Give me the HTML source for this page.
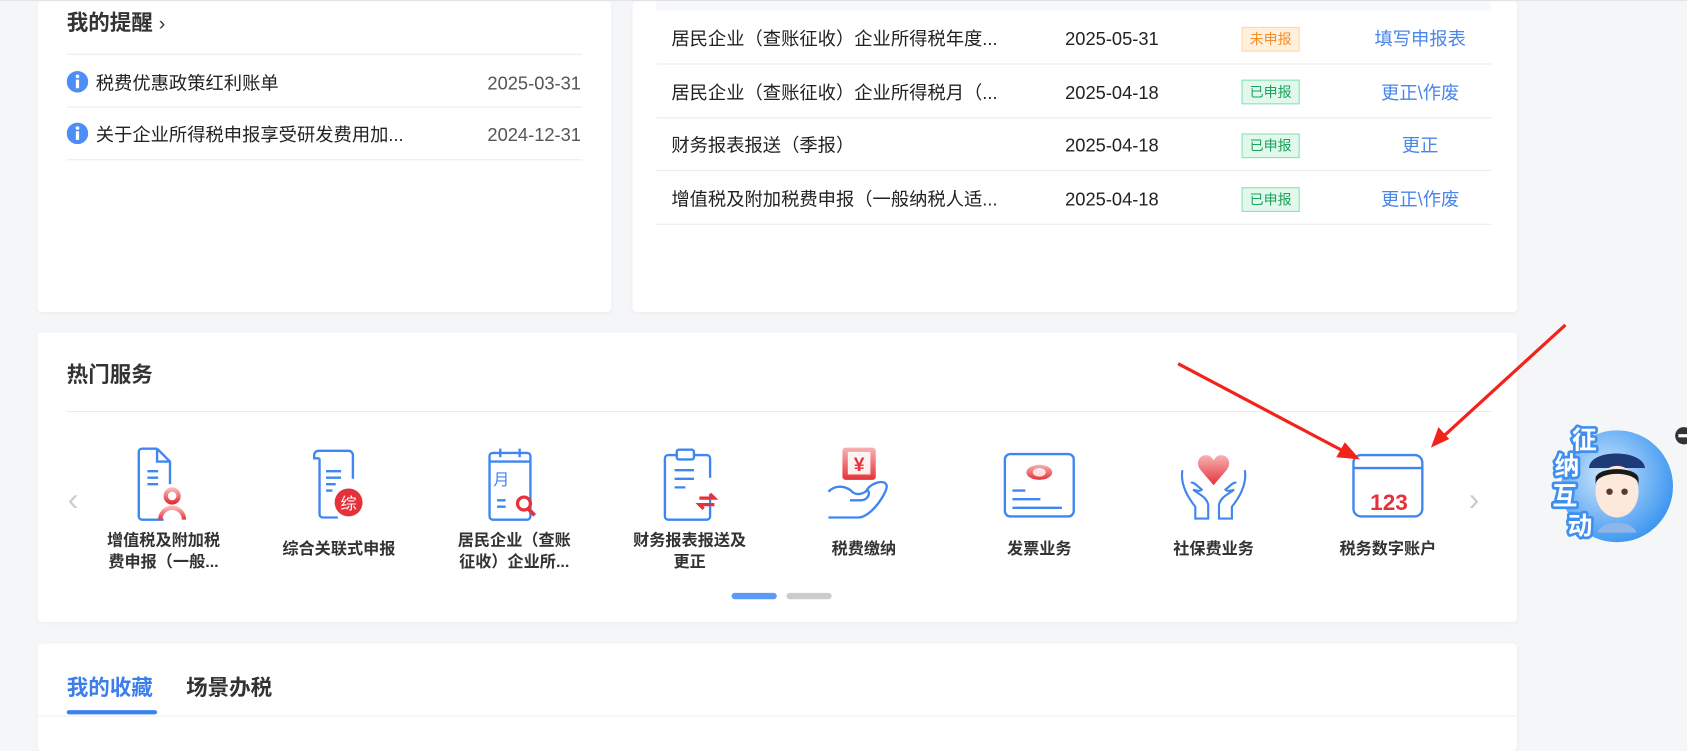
<!DOCTYPE html>
<html><head><meta charset="utf-8">
<style>
html,body{margin:0;padding:0;background:#f5f6f8;overflow:hidden;width:1687px;height:739px}
#s{position:absolute;left:0;top:0;width:1568px;height:687px;transform:scale(1.07589);transform-origin:0 0;font-family:"Liberation Sans","Noto Sans CJK SC",sans-serif;}
.a{position:absolute}
.card{position:absolute;background:#fff;border-radius:4px;box-shadow:0 1px 4px rgba(0,0,0,.04)}
.t17{font-size:17px;color:#222;white-space:nowrap;line-height:22px;height:22px;overflow:visible;margin-top:2px}
.hr{position:absolute;height:1px;background:#ebebeb}
.tag{position:absolute;width:52px;height:21px;font-size:13px;line-height:21px;text-align:center;border:1px solid}
.tg{background:#e3f8ec;border-color:#86e2b6;color:#1aa35a}
.to{background:#fff0de;border-color:#ffd7a6;color:#f38f2a}
.act{position:absolute;width:140px;text-align:center;font-size:17px;color:#4a86e8;line-height:22px;margin-top:2px}
.item{position:absolute;top:415px;width:140px;text-align:center}
.item svg{display:block;margin:0 auto}
.lbl{font-size:15px;font-weight:bold;color:#333;line-height:20px;margin-top:8px}
</style></head><body><div id="s">
<div class="a" style="left:0;top:0;width:1568px;height:1px;background:#e3e4e8"></div>
<svg class="a" style="left:0;top:0" width="0" height="0"><defs>
<linearGradient id="rg" x1="0" y1="0" x2="0" y2="1"><stop offset="0" stop-color="#f7b3b3"/><stop offset="1" stop-color="#e5323a"/></linearGradient>
</defs></svg>

<!-- left card -->
<div class="card" style="left:35px;top:1px;width:533px;height:289px"></div>
<div class="a" style="left:62px;top:9px;font-size:20px;font-weight:bold;color:#333;line-height:26px">我的提醒 <span style="font-weight:normal;font-size:18px">›</span></div>
<div class="hr" style="left:62px;top:50px;width:479px"></div>
<div class="hr" style="left:62px;top:99px;width:479px"></div>
<div class="hr" style="left:62px;top:148px;width:479px"></div>
<svg class="a" style="left:62px;top:66px" width="20" height="20"><circle cx="10" cy="10" r="10" fill="#4e8df5"/><rect x="8.5" y="8" width="3" height="8" fill="#fff"/><circle cx="10" cy="5" r="1.7" fill="#fff"/></svg>
<svg class="a" style="left:62px;top:114px" width="20" height="20"><circle cx="10" cy="10" r="10" fill="#4e8df5"/><rect x="8.5" y="8" width="3" height="8" fill="#fff"/><circle cx="10" cy="5" r="1.7" fill="#fff"/></svg>
<div class="a t17" style="left:89px;top:65px">税费优惠政策红利账单</div>
<div class="a t17" style="left:89px;top:113px">关于企业所得税申报享受研发费用加...</div>
<div class="a t17" style="left:400px;width:140px;text-align:right;top:65px;color:#555">2025-03-31</div>
<div class="a t17" style="left:400px;width:140px;text-align:right;top:113px;color:#555">2024-12-31</div>

<!-- right card -->
<div class="card" style="left:588px;top:1px;width:822px;height:289px"></div>
<div class="a" style="left:610px;top:1px;width:776px;height:9px;background:#f7f8fb"></div>
<div class="hr" style="left:610px;top:59px;width:776px"></div>
<div class="hr" style="left:610px;top:109px;width:776px"></div>
<div class="hr" style="left:610px;top:158px;width:776px"></div>
<div class="hr" style="left:610px;top:208px;width:776px"></div>
<div class="a t17" style="left:624px;top:24px">居民企业（查账征收）企业所得税年度...</div>
<div class="a t17" style="left:624px;top:74px">居民企业（查账征收）企业所得税月（...</div>
<div class="a t17" style="left:624px;top:123px">财务报表报送（季报）</div>
<div class="a t17" style="left:624px;top:173px">增值税及附加税费申报（一般纳税人适...</div>
<div class="a t17" style="left:990px;top:24px">2025-05-31</div>
<div class="a t17" style="left:990px;top:74px">2025-04-18</div>
<div class="a t17" style="left:990px;top:123px">2025-04-18</div>
<div class="a t17" style="left:990px;top:173px">2025-04-18</div>
<div class="tag to" style="left:1154px;top:25px">未申报</div>
<div class="tag tg" style="left:1154px;top:74px">已申报</div>
<div class="tag tg" style="left:1154px;top:124px">已申报</div>
<div class="tag tg" style="left:1154px;top:174px">已申报</div>
<div class="act" style="left:1250px;top:24px">填写申报表</div>
<div class="act" style="left:1250px;top:74px">更正\作废</div>
<div class="act" style="left:1250px;top:123px">更正</div>
<div class="act" style="left:1250px;top:173px">更正\作废</div>

<!-- hot services -->
<div class="card" style="left:35px;top:309px;width:1375px;height:269px"></div>
<div class="a" style="left:62px;top:336px;font-size:20px;font-weight:bold;color:#333;line-height:26px">热门服务</div>
<div class="hr" style="left:62px;top:382px;width:1324px"></div>
<div class="a" style="left:63px;top:448px;font-size:30px;color:#ccc">‹</div>
<div class="a" style="left:1365px;top:448px;font-size:30px;color:#ccc">›</div>

<div class="item" style="left:82px"><svg width="70" height="70" viewBox="0 0 70 70"><path d="M29 2H15a3 3 0 0 0-3 3v60a3 3 0 0 0 3 3h20M29 2l12 12v21M29 2v12h12" fill="none" stroke="#3f86f0" stroke-width="2.2"/><path d="M20 23h10M20 29h10M20 35h10" stroke="#3f86f0" stroke-width="2.2"/><circle cx="43" cy="46" r="6" fill="none" stroke="url(#rg)" stroke-width="4"/><path d="M32 68a11 11 0 0 1 22 0" fill="none" stroke="url(#rg)" stroke-width="4"/></svg><div class="lbl">增值税及附加税<br>费申报（一般...</div></div>
<div class="item" style="left:245px"><svg width="70" height="70" viewBox="0 0 70 70"><path d="M16 4h28a4 4 0 0 1 4 4v22M16 4a4 4 0 0 0-4 4v3h5M17 11v52a3 3 0 0 0 3 3h14" fill="none" stroke="#3f86f0" stroke-width="2.2"/><path d="M23 23h14M23 29h14M23 35h9M23 41h6" stroke="#3f86f0" stroke-width="2.2"/><circle cx="44" cy="52" r="13" fill="#e5323a"/><text x="44" y="58" font-size="15" fill="#fff" text-anchor="middle" font-family="Noto Sans CJK SC">综</text></svg><div class="lbl" style="margin-top:16px">综合关联式申报</div></div>
<div class="item" style="left:408px"><svg width="70" height="70" viewBox="0 0 70 70"><rect x="12" y="6" width="38" height="62" rx="3" fill="none" stroke="#3f86f0" stroke-width="2.2"/><path d="M12 14h38M22 2v8M40 2v8M19 50h8M19 56h8" stroke="#3f86f0" stroke-width="2.2"/><text x="23" y="36" font-size="15" fill="#3f86f0" text-anchor="middle" font-family="Noto Sans CJK SC">月</text><circle cx="44" cy="53" r="6" fill="none" stroke="#e5323a" stroke-width="3"/><path d="M48 58l6 6" stroke="#e5323a" stroke-width="3.5"/></svg><div class="lbl">居民企业（查账<br>征收）企业所...</div></div>
<div class="item" style="left:571px"><svg width="70" height="70" viewBox="0 0 70 70"><path d="M23 8h-8a3 3 0 0 0-3 3v54a3 3 0 0 0 3 3h36a3 3 0 0 0 3-3V44M39 8h12a3 3 0 0 1 3 3v18" fill="none" stroke="#3f86f0" stroke-width="2.2"/><rect x="23" y="3" width="16" height="9" rx="2" fill="none" stroke="#3f86f0" stroke-width="2.2"/><path d="M21 22h18M21 30h18M21 38h10" stroke="#3f86f0" stroke-width="2.2"/><path d="M44 48h14l-4-4M58 54H44l4 4" fill="none" stroke="#e5323a" stroke-width="3"/></svg><div class="lbl">财务报表报送及<br>更正</div></div>
<div class="item" style="left:733px"><svg width="70" height="70" viewBox="0 0 70 70"><rect x="15" y="1" width="31" height="30" rx="3" fill="url(#rg)"/><rect x="20" y="5" width="21" height="21" fill="#fff" opacity=".9"/><text x="30.5" y="23" font-size="18" font-weight="bold" fill="#e5323a" text-anchor="middle">¥</text><path d="M2 42c8-8 18-4 22 0s12 2 14-2c4-6 16-10 18-4 2 5-14 30-26 30H2M22 50h10c6 0 10-6 6-10" fill="none" stroke="#3f86f0" stroke-width="2.2"/></svg><div class="lbl" style="margin-top:16px">税费缴纳</div></div>
<div class="item" style="left:896px"><svg width="70" height="70" viewBox="0 0 70 70"><rect x="3" y="7" width="64" height="58" rx="5" fill="none" stroke="#3f86f0" stroke-width="2.2"/><ellipse cx="35" cy="24" rx="12" ry="7" fill="url(#rg)"/><ellipse cx="35" cy="24" rx="6" ry="4" fill="#fff" opacity=".8"/><path d="M10 41h12M10 49h26M10 57h46" stroke="#3f86f0" stroke-width="2.2"/></svg><div class="lbl" style="margin-top:16px">发票业务</div></div>
<div class="item" style="left:1058px"><svg width="70" height="70" viewBox="0 0 70 70"><path d="M35 36L23 22c-5-6-2-14 5-14 4 0 6 3 7 5 1-2 3-5 7-5 7 0 10 8 5 14z" fill="url(#rg)"/><path d="M6 22c-2 12 4 24 12 34v11h12V54c-2-8-10-10-14-14 2 1 7 2 8 0-3-2-8-8-10-6M64 22c2 12-4 24-12 34v11H40V54c2-8 10-10 14-14-2 1-7 2-8 0 3-2 8-8 10-6" fill="none" stroke="#3f86f0" stroke-width="2"/></svg><div class="lbl" style="margin-top:16px">社保费业务</div></div>
<div class="item" style="left:1220px"><svg width="70" height="70" viewBox="0 0 70 70"><rect x="3" y="8" width="64" height="57" rx="7" fill="none" stroke="#3f86f0" stroke-width="2.2"/><path d="M3 20h64" stroke="#3f86f0" stroke-width="2.2"/><text x="36" y="59" font-size="21" font-weight="bold" fill="#e5323a" text-anchor="middle">123</text></svg><div class="lbl" style="margin-top:16px">税务数字账户</div></div>

<div class="a" style="left:680px;top:551px;width:42px;height:6px;border-radius:3px;background:#5b9af5"></div>
<div class="a" style="left:731px;top:551px;width:42px;height:6px;border-radius:3px;background:#cccccc"></div>

<!-- bottom -->
<div class="card" style="left:35px;top:598px;width:1375px;height:100px"></div>
<div class="a" style="left:62px;top:627px;font-size:20px;font-weight:bold;color:#3b7de9;line-height:26px">我的收藏</div>
<div class="a" style="left:173px;top:627px;font-size:20px;font-weight:bold;color:#333;line-height:26px">场景办税</div>
<div class="hr" style="left:35px;top:665px;width:1375px;background:#eee"></div>
<div class="a" style="left:62px;top:660px;width:84px;height:4px;border-radius:2px;background:#3b82f0"></div>

<!-- red arrows -->
<svg class="a" style="left:0;top:0" width="1568" height="687">
<path d="M1095 338L1250 420" stroke="#f2231b" stroke-width="3"/>
<path d="M1264 427L1242 425L1250 411Z" fill="#f2231b"/>
<path d="M1455 302L1340 407" stroke="#f2231b" stroke-width="3"/>
<path d="M1330 416L1337 397L1347 408Z" fill="#f2231b"/>
</svg>

<!-- mascot -->
<svg class="a" style="left:1425px;top:385px" width="143" height="125">
<defs><radialGradient id="bg" cx=".4" cy=".4" r=".7"><stop offset="0" stop-color="#cfe7fb"/><stop offset="1" stop-color="#2d8ef0"/></radialGradient></defs>
<circle cx="78" cy="67" r="52" fill="url(#bg)"/>
<path d="M52 50c0-18 50-18 52 0z" fill="#1f3a78"/>
<ellipse cx="78" cy="72" rx="20" ry="24" fill="#fde8dc"/>
<path d="M58 66c0-14 40-14 40 0v-6c0-12-40-12-40 0z" fill="#1a1a1a"/>
<circle cx="71" cy="72" r="3" fill="#5a3a2a"/><circle cx="85" cy="72" r="3" fill="#5a3a2a"/>
<path d="M60 110c4-12 32-12 36 0z" fill="#8fb6e6"/>
<circle cx="140" cy="20" r="8" fill="#333"/><rect x="135" y="18.5" width="10" height="3" fill="#fff"/>
<g font-family="Noto Sans CJK SC" font-weight="bold" font-size="23" fill="#fff" stroke="#3f8ff0" stroke-width="5" stroke-linejoin="round" paint-order="stroke">
<text x="36" y="32">征</text><text x="20" y="56">纳</text><text x="18" y="84">互</text><text x="32" y="112">动</text></g>
</svg>
</div></body></html>
